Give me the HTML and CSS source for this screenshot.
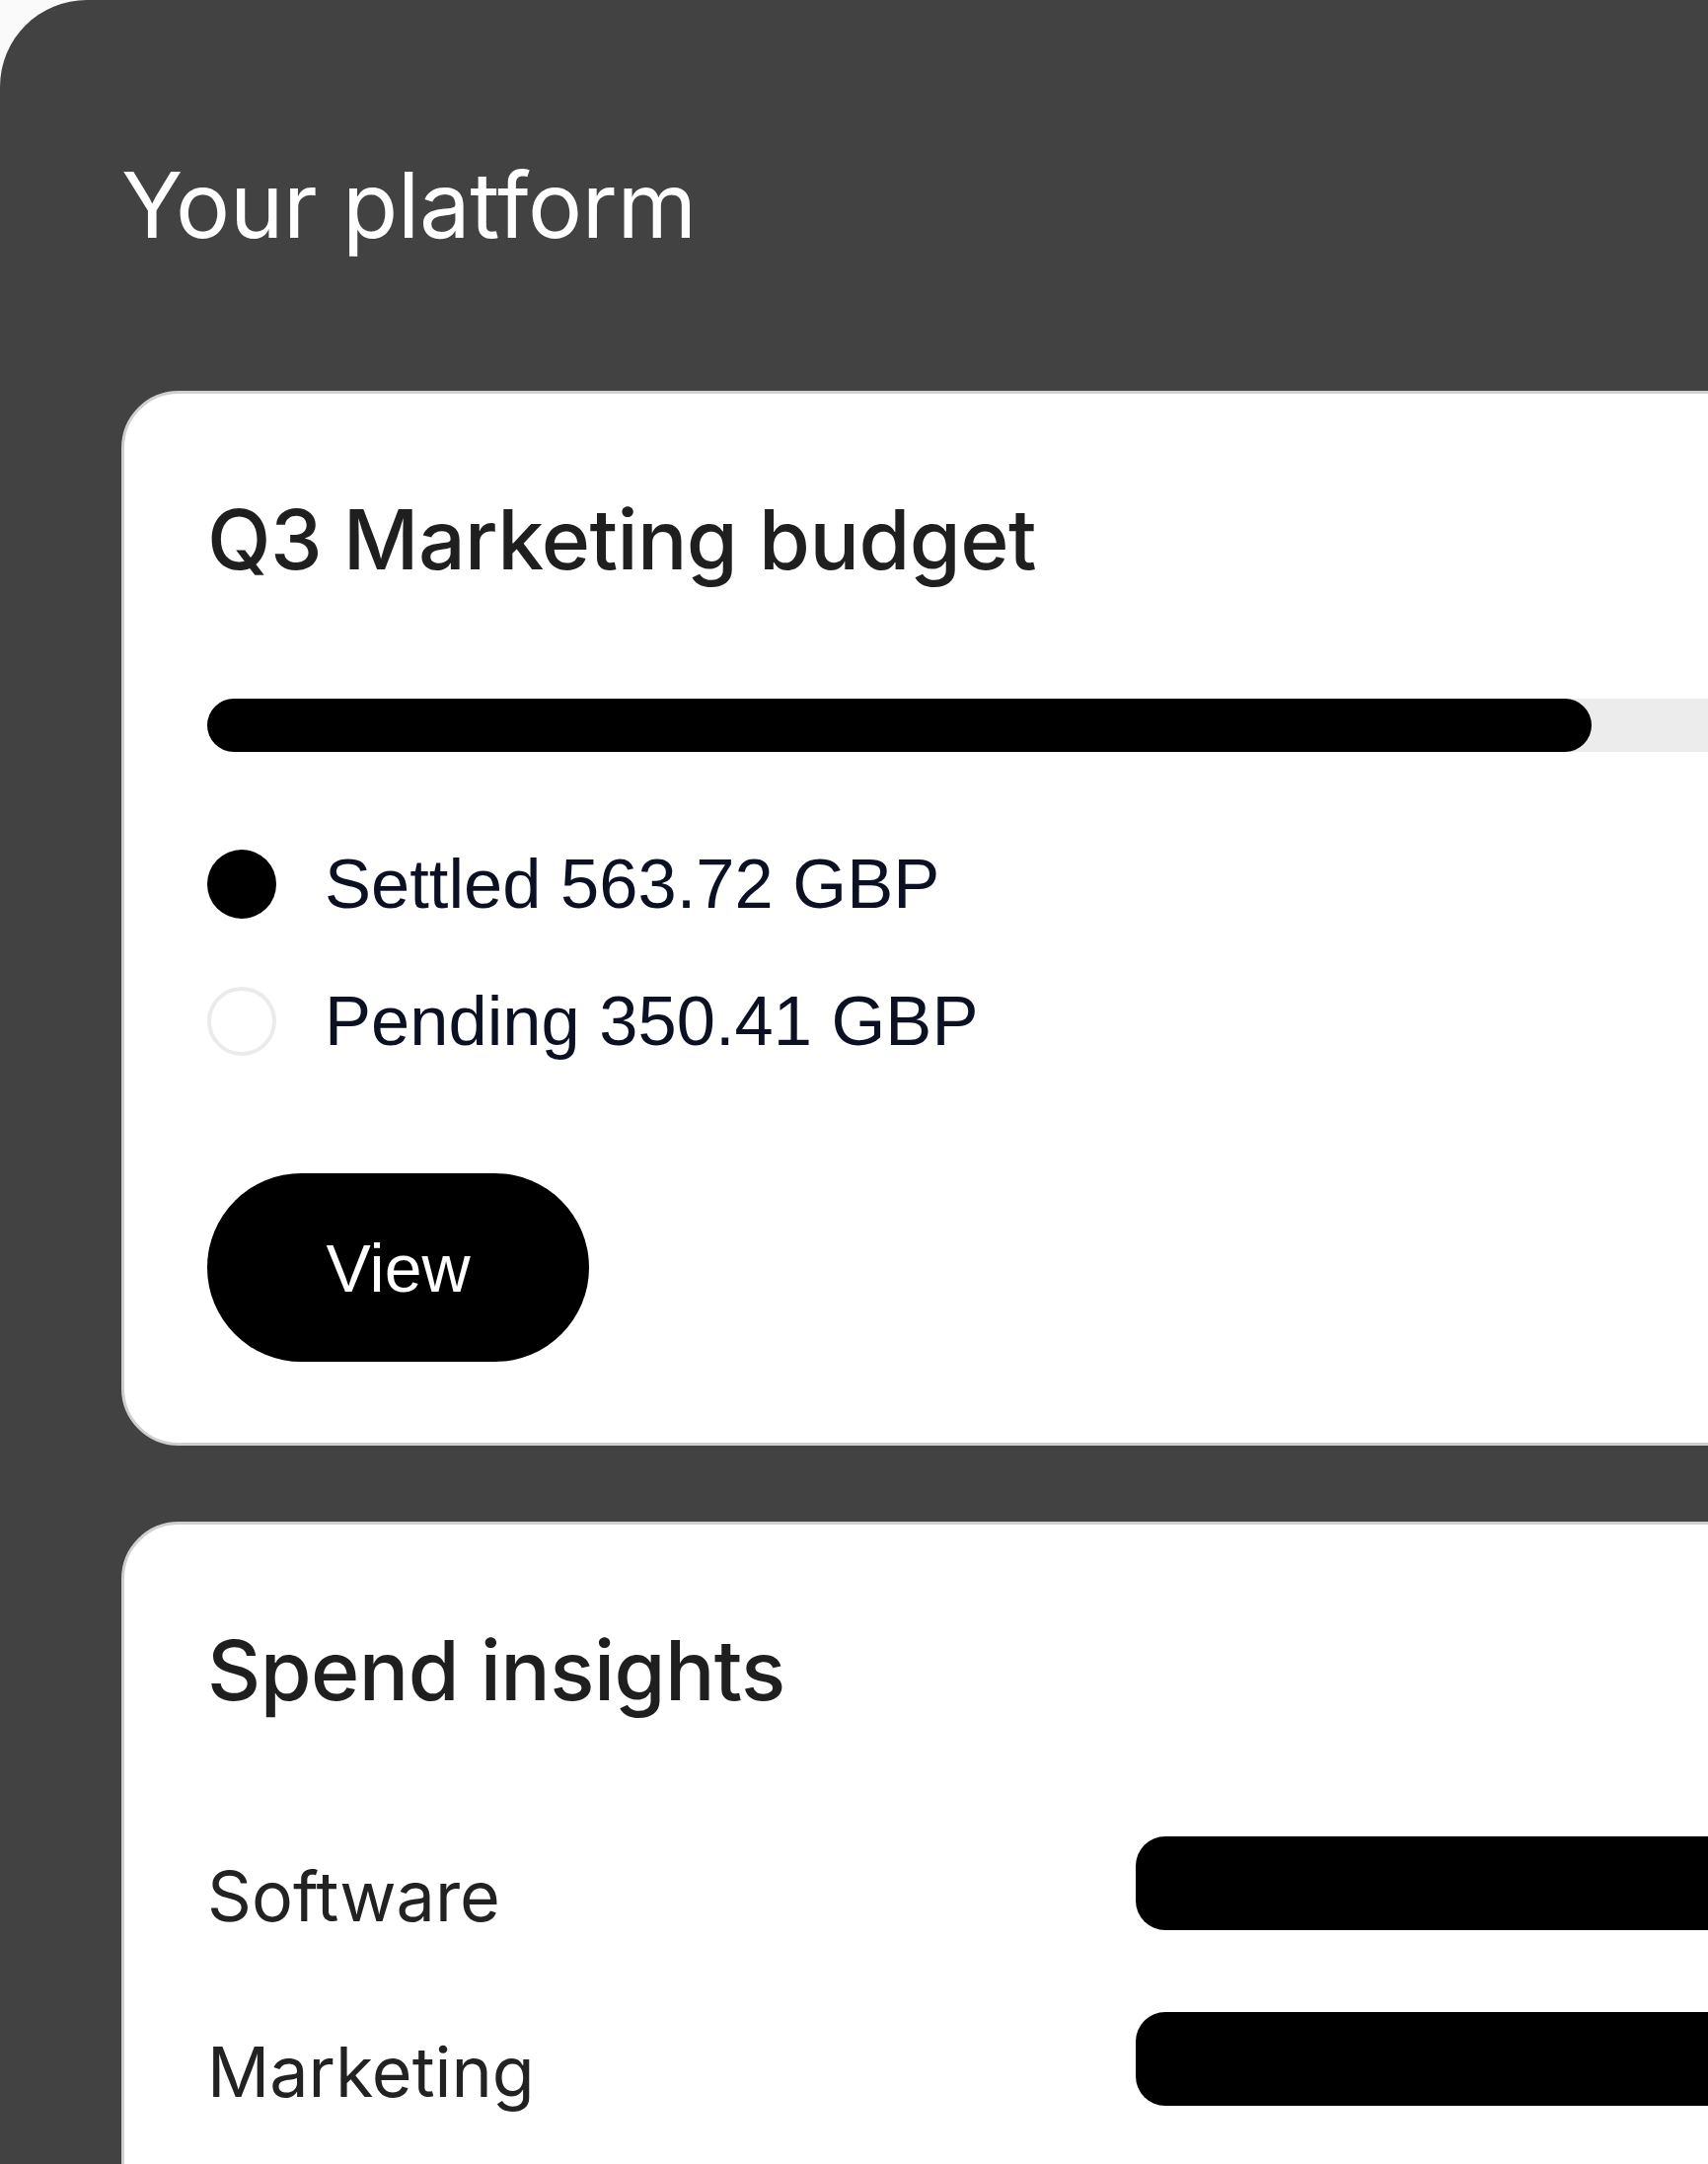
FILE: index.html
```html
<!DOCTYPE html>
<html lang="en">
<head>
<meta charset="utf-8">
<title>Your platform</title>
<link rel="stylesheet" href="styles.css">
</head>
<body>
<main class="panel">
  <h1 class="panel-title">Your platform</h1>

  <section class="card budget">
    <h2 class="card-title">Q3 Marketing budget</h2>
    <div class="track"><div class="fill" style="width: 1403px"></div></div>
    <ul class="legend">
      <li class="legend-row"><span class="dot dot-filled"></span><span class="legend-text">Settled 563.72 GBP</span></li>
      <li class="legend-row"><span class="dot dot-empty"></span><span class="legend-text">Pending 350.41 GBP</span></li>
    </ul>
    <button class="view-btn" type="button">View</button>
  </section>

  <section class="card insights">
    <h2 class="card-title">Spend insights</h2>
    <div class="rows">
      <div class="row"><span class="row-label">Software</span><div class="row-bar" style="width: 800px"></div></div>
      <div class="row"><span class="row-label">Marketing</span><div class="row-bar" style="width: 700px"></div></div>
    </div>
  </section>
</main>
</body>
</html>
```

FILE: styles.css
```css
html, body {
  margin: 0;
  padding: 0;
  overflow: hidden;
  background: #fafafa;
}

body {
  width: 1731px;
  height: 2193px;
  font-family: "Inter", "Liberation Sans", sans-serif;
}

.panel {
  width: 2200px;
  min-height: 2600px;
  background: #424242;
  border-top-left-radius: 88px;
  padding: 162px 0 0 123px;
  box-sizing: border-box;
}

.panel-title {
  margin: 0;
  font-family: "Inter", sans-serif;
  font-weight: 400;
  font-size: 92px;
  line-height: 1;
  letter-spacing: -0.3px;
  color: #ffffff;
}

.card {
  width: 1900px;
  box-sizing: border-box;
  background: #ffffff;
  border: 3px solid #cfcfcf;
  border-radius: 58px;
}

.budget {
  margin-top: 142px;
  padding: 106px 84px 82px;
}

.insights {
  margin-top: 77px;
  padding: 106px 84px 200px;
}

.card-title {
  margin: 0;
  font-family: "Inter", sans-serif;
  font-weight: 500;
  font-size: 84px;
  line-height: 1;
  letter-spacing: -0.6px;
  color: #1f1f1f;
}

.track {
  margin-top: 119px;
  height: 54px;
  background: #ececec;
  border-radius: 27px 0 0 27px;
}

.fill {
  height: 54px;
  background: #000000;
  border-radius: 27px;
}

.legend {
  list-style: none;
  margin: 99px 0 0;
  padding: 0;
  display: flex;
  flex-direction: column;
  gap: 69px;
}

.legend-row {
  display: flex;
  align-items: center;
  gap: 49px;
  height: 70px;
}

.dot {
  width: 70px;
  height: 70px;
  border-radius: 50%;
  box-sizing: border-box;
  flex: none;
}

.dot-filled {
  background: #000000;
}

.dot-empty {
  background: #ffffff;
  border: 4px solid #ebebeb;
}

.legend-text {
  font-family: "Liberation Sans", Arial, sans-serif;
  font-size: 70.5px;
  line-height: 70px;
  color: #0b1022;
}

.view-btn {
  display: flex;
  align-items: center;
  justify-content: center;
  margin-top: 119px;
  width: 387px;
  height: 191px;
  padding: 0;
  border: none;
  border-radius: 96px;
  background: #000000;
  color: #ffffff;
  font-family: "Liberation Sans", Arial, sans-serif;
  font-size: 68px;
  line-height: 1;
}

.rows {
  margin-top: 125px;
  display: flex;
  flex-direction: column;
  gap: 81px;
}

.row {
  display: grid;
  grid-template-columns: 941px auto;
  align-items: center;
}

.row-label {
  font-family: "Inter", sans-serif;
  font-weight: 400;
  font-size: 70px;
  line-height: 1;
  color: #222222;
  margin-top: 27px;
}

.row-bar {
  height: 95px;
  background: #000000;
  border-radius: 30px;
}
```
